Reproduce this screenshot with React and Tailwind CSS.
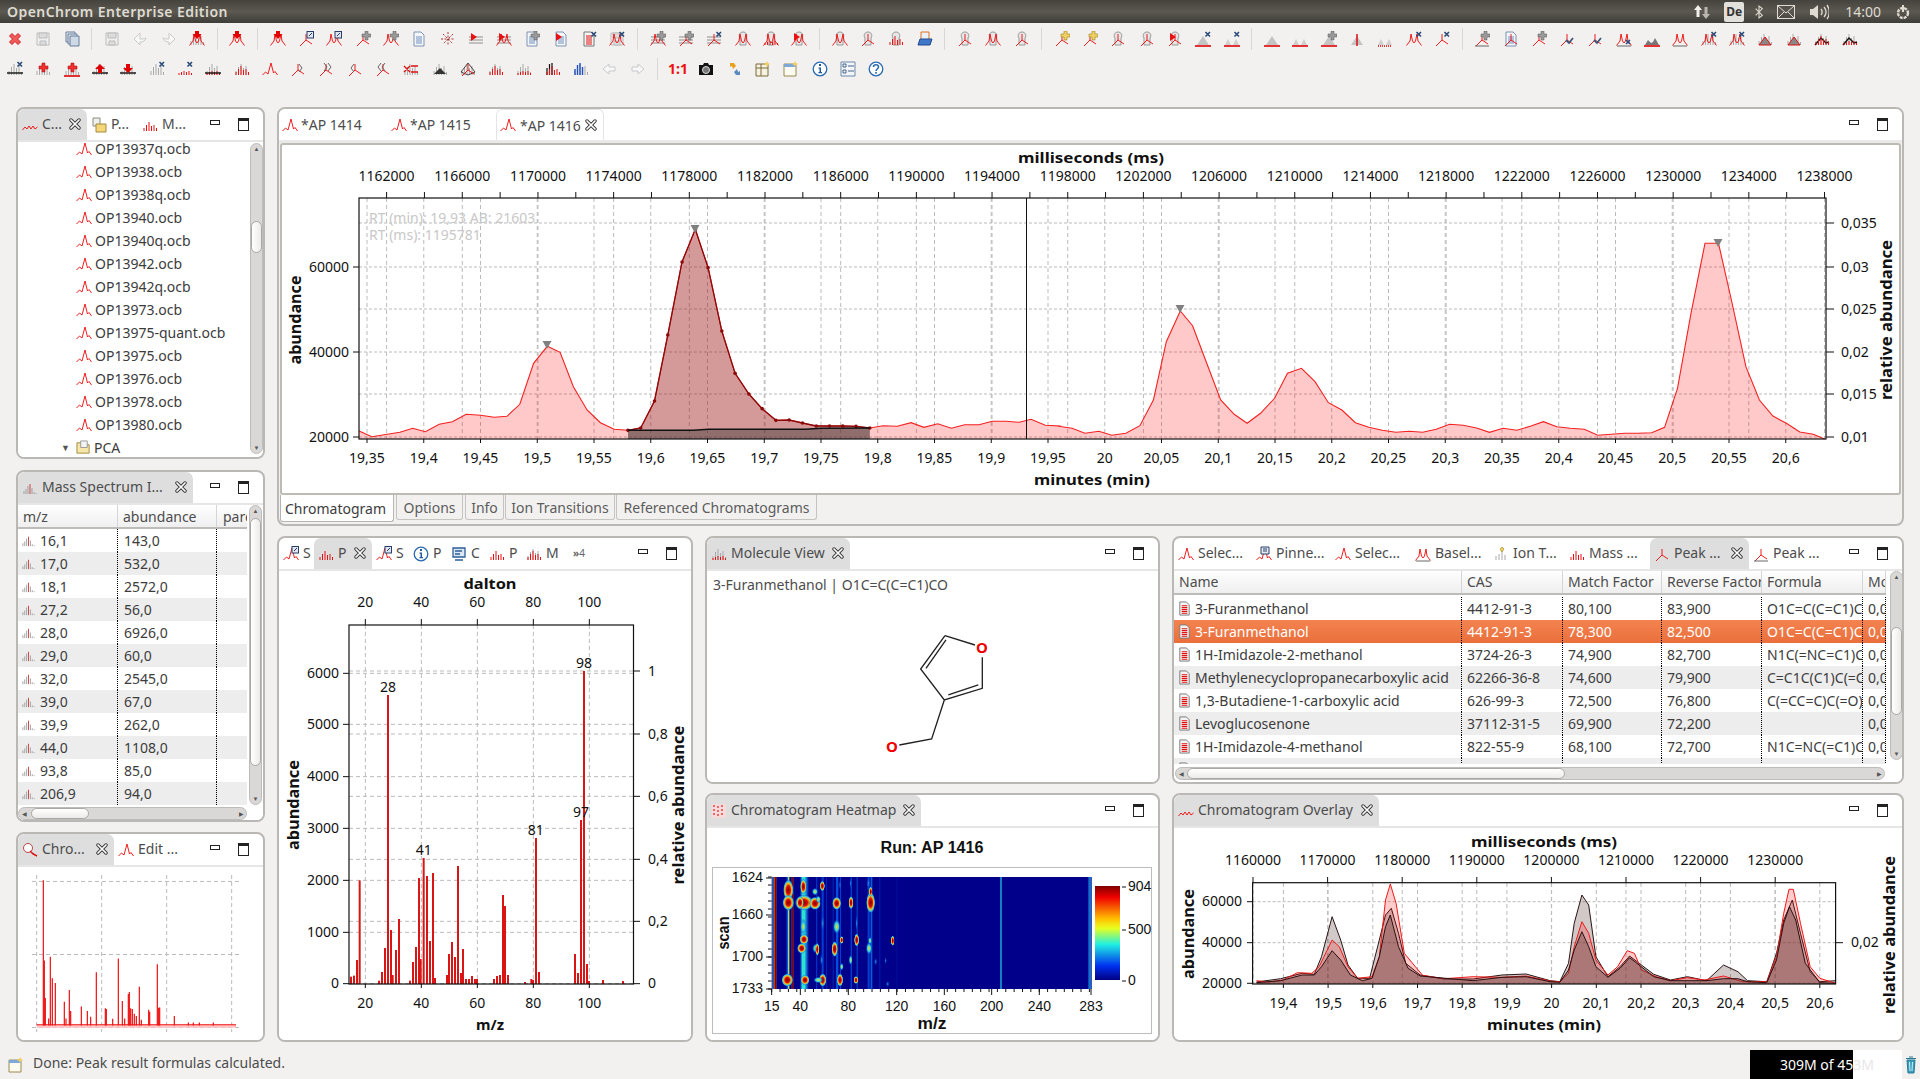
import React from "react";

const line = { fill: "none", stroke: "#ee1111", strokeWidth: 0.95 };
const gray = { fill: "none", stroke: "#a9a9a9", strokeWidth: 1 };

// icon parts, stacked on a 16x16 box
const parts = {
  chrom: <polyline {...line} points="0.5,14 3.5,11 6,13 9,2 11.5,12 13,10.5 15.5,14" />,
  twin: <polyline {...line} points="0.5,14.5 4,10 5,3 6.5,10 8,12 9.5,10 11,3 12,10 15.5,14.5" />,
  one: <path {...line} d="M8 3V9L2 15M8 9L14 13" />,
  wave: <polyline {...line} points="0.5,13 3,10 5,12 7,9 9,12 11,9 13,12 15.5,10" />,
  down: <path fill="#e00000" d="M6 0h4v3h2.5L8 8 3.5 3H6z" />,
  up: <path fill="#e00000" d="M8 3l5 5h-3v4H6V8H3z" />,
  dn2: <path fill="#e00000" d="M6 3h4v4h3l-5 5-5-5h3z" />,
  bars: <path {...gray} d="M2 14v-4M4.500 14V6M7 14V3M9.500 14V7M12 14V5M14.500 14v-3" />,
  red: <path fill="none" stroke="#e81010" strokeWidth="1" d="M2 14v-3M4.500 14V8M7 14V5M9.500 14V9M12 14V8M14.500 14v-3" />,
  low: <path fill="none" stroke="#e81010" strokeWidth="1" d="M2 14v-2M4.500 14v-3M7 14v-4M9.500 14v-3M12 14v-4M14.500 14v-2" />,
  blk: <path fill="none" stroke="#111" strokeWidth="1.200" d="M2 14V7M4.500 14V3M7 14V2" />,
  blue: <path fill="none" stroke="#2050c0" strokeWidth="1.400" d="M2 14V8M4.500 14V4M7 14V2M9.500 14V6" />,
  ul: <path stroke="#e00000" strokeWidth="1.600" d="M0 15h16" />,
  blkul: <path stroke="#111" strokeWidth="1.400" d="M0 12h16" />,
  plus: <path fill="#9a9a9a" stroke="#555" strokeWidth="0.500" d="M10 0h3v3h3v3h-3v3h-3V6H7V3h3z" />,
  yplus: <path fill="#f0d060" stroke="#a08020" strokeWidth="0.600" d="M10 0h3v3h3v3h-3v3h-3V6H7V3h3z" />,
  rplus: <path fill="#f03030" stroke="#a00" strokeWidth="0.500" d="M7 2h3v3h3v3h-3v3H7V8H4V5h3z" />,
  x: <path fill="none" stroke="#2a4a78" strokeWidth="1.600" d="M10.500 1l4.500 4.500M15 1l-4.500 4.500" />,
  box: <g><rect x="9" y="0.500" width="6.500" height="6.500" fill="#dfe6f0" stroke="#2a3f68" /><path stroke="#2a3f68" d="M11 5l3-3" /></g>,
  doc: <g><path fill="#f4f6fa" stroke="#7f93b0" d="M3 1h7l3 3v11H3z" /><path stroke="#6f8fc0" d="M5 6h6M5 8h6M5 10h6M5 12h6" /></g>,
  redlist: <g><path fill="#f4f4f4" stroke="#777" d="M3 1h7l3 3v11H3z" /><path stroke="#e01010" strokeWidth="1.200" d="M5 5h6M5 7h6M5 9h6M5 11h6M5 13h6" /></g>,
  lines: <path stroke="#8d8d8d" d="M1 6h14M1 9h14M1 12h14" />,
  flag: <path fill="#e81010" d="M3 2l6 4-6 4z" />,
  bottle: <path fill="#e6e6e6" stroke="#999" d="M5 14V7c-2-3 0-6 3-6s5 3 3 6v7z" />,
  tri: <path fill="#c4c4c4" d="M8 5l6 9H2z" />,
  tri2: <path fill="#cfcfcf" d="M4 8l3 6H1zM12 8l3 6H9z" />,
  spike: <path stroke="#e00000" strokeWidth="1.400" d="M8 3v12" />,
  dots: <path stroke="#e00000" strokeWidth="1.600" strokeDasharray="1 1" d="M1 15h14" />,
  check: <path fill="none" stroke="#3a5578" strokeWidth="1.800" d="M7 9l3 3 4-5" />,
  fillgray: <path fill="#777" d="M1 14l3-5 3 3 2-1 2-4 4 7z" />,
  fillred: <path fill="#888" stroke="#e01010" d="M2 14l6-8 6 8z" />,
  peakblk: <path fill="none" stroke="#111" strokeWidth="1.500" d="M1 14l6-7 5 5 3-1" />,
  chevr: <path fill="none" stroke="#666" d="M9 3l3 4-3 4" />,
  chevrr: <path fill="none" stroke="#666" d="M6 2l3 4-3 4M10 2l3 4-3 4" />,
  chevl: <path fill="none" stroke="#666" d="M7 3L4 7l3 4" />,
  chevll: <path fill="none" stroke="#666" d="M6 2L3 6l3 4M10 2L7 6l3 4" />,
  spark: <path stroke="#a33" strokeDasharray="2 1.500" d="M8 1v14M1 8h14M3 3l10 10M13 3L3 13" />,
  cross: <path fill="none" stroke="#e01010" strokeWidth="1.400" d="M1 5l6 6M7 5l-6 6M8 5h7M8 11h7" />,
  diamond: <path fill="none" stroke="#444" d="M8 2l7 9-7 3-7-3z" />,
  blktri: <path fill="#333" d="M2 13l6-6 6 6z" />,
  close: <path fill="#f15a5a" stroke="#cf2020" d="M2.500 5L5 2.500l3 3 3-3L13.500 5l-3 3 3 3-2.500 2.500-3-3-3 3L2.500 11l3-3z" />,
  save: <g><path fill="#f0f0f0" stroke="#bcbcbc" d="M2 2h12v12H2z" /><path fill="#dcdcdc" stroke="#bcbcbc" d="M4 2h8v5H4zM5 10h6v4H5z" /></g>,
  saveall: <g><path fill="#dfe8f2" stroke="#6a7f98" d="M2 1h9v10H2z" /><path fill="#dfe8f2" stroke="#6a7f98" d="M4 3h9v10H4z" /><path fill="#cdd9e6" stroke="#6a7f98" d="M6 5h9v10H6z" /></g>,
  undo: <path fill="#f8f8f8" stroke="#c9c9c9" d="M8 2l-6 6 6 6v-3c3 0 5-1 6-4-2 1-3 1-6 1z" />,
  redo: <path fill="#f8f8f8" stroke="#c9c9c9" d="M8 2l6 6-6 6v-3c-3 0-5-1-6-4 2 1 3 1 6 1z" />,
  back: <path fill="#f8f8f8" stroke="#c9c9c9" d="M8 3L2 8l6 5v-3h6V6H8z" />,
  fwd: <path fill="#f8f8f8" stroke="#c9c9c9" d="M8 3l6 5-6 5v-3H2V6h6z" />,
  folder: <g><path fill="#f6e7a8" stroke="#a08a40" d="M1 14V3h5l2 2h6v9z" /><path fill="#f4f4f4" stroke="#999" d="M5 1h7v7H5z" /></g>,
  fold2: <g><path fill="#e8f0f8" stroke="#e07020" d="M4 1h8v9H4z" /><path fill="#3f78c8" stroke="#204a90" d="M1 14l2-6h12l-2 6z" /></g>,
  camera: <g><path fill="#111" d="M1 4h4l1-2h4l1 2h4v10H1z" /><circle cx="8" cy="9" r="3.500" fill="#777" stroke="#ddd" /></g>,
  sync: <g><path fill="#e8a020" d="M3 2l4 0 2 3-3 3-1-3-2 1z" /><path fill="#5a8ac0" d="M13 14H9l-2-3 3-3 1 3 2-1z" /></g>,
  table: <g><path fill="#f6f2e0" stroke="#7a6a3a" d="M1 3h12v12H1z" /><path stroke="#7a6a3a" d="M1 7h12M6 3v12" /><path fill="#f0d060" d="M12 0l1 2 2 1-2 1-1 2-1-2-2-1 2-1z" /></g>,
  win: <g><path fill="#fdfaf0" stroke="#9a8a50" d="M1 3h12v12H1z" /><path fill="#7fa8d8" d="M1 3h12v3H1z" /><path fill="#f0d060" d="M12 0l1 2 2 1-2 1-1 2-1-2-2-1 2-1z" /></g>,
  info: <g><circle cx="8" cy="8" r="6.800" fill="#fff" stroke="#2a6ab0" strokeWidth="1.300" /><path fill="#1d5a9e" d="M7 3h2v2H7zM6.500 6.500H9V11h1v1.300H6.500V11h1V7.800h-1z" /></g>,
  help: <g><circle cx="8" cy="8" r="6.800" fill="#fff" stroke="#2a6ab0" strokeWidth="1.300" /><path fill="none" stroke="#2a6ab0" strokeWidth="1.600" d="M5.500 6c0-3 5-3 5 0 0 2-2.500 2-2.500 4" /><path stroke="#2a6ab0" strokeWidth="1.600" d="M8 11v1.800" /></g>,
  checks: <g><path fill="#f2f6fb" stroke="#6f88a8" d="M1 1h14v14H1z" /><path fill="none" stroke="#46648a" d="M3 3h3v3H3zM3 9h3v3H3zM8 5h6M8 10h6" /></g>,
  monitor: <g><path fill="#dbe7f4" stroke="#2d5f95" strokeWidth="1.300" d="M2 2h12v9H2z" /><path stroke="#2d5f95" strokeWidth="1.300" d="M4 5h7M4 8h5M4 14h8" /></g>,
  heat: <g><rect x="1" y="1" width="14" height="14" fill="#f7dada" /><path stroke="#e03030" strokeWidth="1.300" strokeDasharray="2 2" d="M3 2v12M7 3v10M11 2v12" /></g>,
  small: <g><path stroke="#a0a0a0" d="M2 14v-3M4 14V9M6 14V6M10 14V8M12 14v-2M14 14v-1" /><path stroke="#d04040" d="M8 14V4" /></g>,
  files: <g><path fill="#f0f0ea" stroke="#8a8a80" d="M2 1h7v8H2z" /><path fill="#f6d777" stroke="#a08a40" d="M5 7h10v8H5z" /></g>,
  search: <g><circle cx="6" cy="6" r="4.500" fill="#fff" stroke="#b44" /><path stroke="#e01010" strokeWidth="1.400" d="M8 9l3 3 4 2" /></g>,
  ion: <g><path {...gray} d="M3 14v-4M6 14V8M9 14V5M12 14V9" /><path fill="#f0d060" stroke="#a08020" strokeWidth="0.600" d="M9 1l2 2-2 3-2-3z" /></g>,
  pin: <g><path fill="#e4eaf4" stroke="#2a3f68" d="M5 1h8v7H5z" /><path stroke="#2a3f68" d="M7 3h4M7 5h4" /></g>,
  base: <path fill="none" stroke="#666" d="M1 15h14" />,
  blackx: <path fill="none" stroke="#2a4a78" strokeWidth="1.600" d="M10 9l4 4M14 9l-4 4" />,
};

function Ico({ n, s = 16, className = "" }) {
  return (
    <svg viewBox="0 0 16 16" width={s} height={s} className={"shrink-0 " + className}>
      {n.split(" ").map((k, i) => (
        <React.Fragment key={i}>{parts[k]}</React.Fragment>
      ))}
    </svg>
  );
}

const row1 = [
  "close", "save", "saveall", "|",
  "save", "undo", "redo", "bars twin down", "|",
  "twin down", "|",
  "twin down", "one box", "twin box", "one plus", "twin plus", "doc", "spark", "lines flag", "lines twin flag", "doc plus", "doc flag", "redlist x", "save twin x", "|",
  "lines twin plus", "lines one plus", "lines one x", "bottle twin", "bottle low twin", "bottle twin flag", "|",
  "bottle twin", "bottle one", "bottle red", "fold2", "|",
  "bottle one", "bottle twin", "bottle one", "|",
  "one yplus", "one yplus", "bottle one", "bottle one", "bottle one flag", "tri ul x", "tri2 ul x", "|",
  "tri ul", "tri2 ul", "tri ul plus", "tri spike", "tri2 dots", "twin x", "one x", "|",
  "one plus base", "doc one", "one plus", "one check", "one check", "twin base blackx", "fillgray ul", "twin base", "bars twin x", "bars twin x", "bars fillred", "bars fillred", "bars peakblk red", "bars peakblk low",
];
const row2 = [
  "bars blkul x", "bars rplus", "bars ul rplus", "bars blkul up", "bars blkul dn2", "bars x", "low x", "bars low blkul", "bars red",
  "chrom", "one chevr", "one chevrr", "one chevl", "one chevll", "bars cross", "bars blktri", "bars diamond one", "bars red", "bars low", "blk red", "bars blue", "back", "fwd", "|",
  "1:1", "camera", "sync", "table", "win", "info", "checks", "help",
];

function ToolRow({ items }) {
  return (
    <div className="flex items-center h-[31px] pl-[1px]">
      {items.map((it, i) =>
        it === "|" ? (
          <div key={i} className="w-[12.100px] h-[22px] flex justify-center">
            <div className="w-px h-full bg-[#d9d8d5]" />
          </div>
        ) : (
          <div key={i} className="w-[28.300px] flex justify-center items-center">
            {it === "1:1" ? <span className="text-[14px] font-bold text-[#f01010] leading-none">1:1</span> : <Ico n={it} />}
          </div>
        )
      )}
    </div>
  );
}

function CloseX() {
  return (
    <svg viewBox="0 0 12 12" width="12" height="12" className="shrink-0">
      <path d="M2 2l8 8M10 2l-8 8" stroke="#333" strokeWidth="3.400" strokeLinecap="round" />
      <path d="M2 2l8 8M10 2l-8 8" stroke="#fff" strokeWidth="1.700" strokeLinecap="round" />
    </svg>
  );
}

function WinButtons() {
  return (
    <div className="ml-auto flex items-center shrink-0">
      <div className="w-[10px] h-[5px] border border-[#222] bg-white -mt-[4px]" />
      <div className="w-[11px] h-[13px] ml-[18px] border border-[#222] border-t-[3px] bg-white" />
    </div>
  );
}

function Tab({ t }) {
  const bg = t.active ? "bg-[#dedede] rounded-t-[7px]" : "";
  return (
    <div className={"flex items-center h-full pl-[4px] gap-[4px] shrink-0 overflow-hidden " + t.w + " " + bg}>
      <Ico n={t.icon} />
      <span className="text-[#4c4c4c] whitespace-nowrap -mt-[2px]">{t.label}</span>
      {t.close && <span className="ml-auto mr-[6px] -mt-[2px]"><CloseX /></span>}
    </div>
  );
}

function Panel({ className, tabs, children, extra }) {
  return (
    <div className={"flex flex-col bg-white border-[2px] border-[#b9b8b4] rounded-[8px] overflow-hidden " + className}>
      <div className="flex items-center h-[31px] shrink-0 text-[14px] pr-[14px]">
        {tabs.map((t, i) => <Tab key={i} t={t} />)}
        {extra}
        <WinButtons />
      </div>
      <div className="h-[2px] bg-[#e6e6e6] shrink-0" />
      <div className="flex-1 min-h-0 bg-white overflow-hidden">{children}</div>
    </div>
  );
}

function VScroll({ className, top, h }) {
  return (
    <div className={"flex flex-col items-center w-[13px] bg-[#d9d8d6] border border-[#bdbcb9] rounded-full shrink-0 overflow-hidden " + className}>
      <div className="h-[10px] flex items-center justify-center text-[6px] text-[#555] leading-none shrink-0">▲</div>
      <div className={"shrink-0 " + top} />
      <div className={"w-full shrink-0 bg-linear-to-r from-white to-[#ecebe9] border border-[#a9a8a5] rounded-full " + h} />
      <div className="mt-auto h-[10px] flex items-center justify-center text-[6px] text-[#555] leading-none shrink-0">▼</div>
    </div>
  );
}

function HScroll({ className, left, w }) {
  return (
    <div className={"flex items-center h-[13px] bg-[#d9d8d6] border border-[#bdbcb9] rounded-full overflow-hidden " + className}>
      <div className="w-[10px] text-[6px] text-[#555] text-center leading-none shrink-0">◀</div>
      <div className={"shrink-0 " + left} />
      <div className={"h-full shrink-0 bg-linear-to-b from-white to-[#ecebe9] border border-[#a9a8a5] rounded-full " + w} />
      <div className="ml-auto w-[10px] text-[6px] text-[#555] text-center leading-none shrink-0">▶</div>
    </div>
  );
}

const files = ["OP13937q.ocb", "OP13938.ocb", "OP13938q.ocb", "OP13940.ocb", "OP13940q.ocb", "OP13942.ocb", "OP13942q.ocb", "OP13973.ocb", "OP13975-quant.ocb", "OP13975.ocb", "OP13976.ocb", "OP13978.ocb", "OP13980.ocb"];

const ions = [["16,1", "143,0"], ["17,0", "532,0"], ["18,1", "2572,0"], ["27,2", "56,0"], ["28,0", "6926,0"], ["29,0", "60,0"], ["32,0", "2545,0"], ["39,0", "67,0"], ["39,9", "262,0"], ["44,0", "1108,0"], ["93,8", "85,0"], ["206,9", "94,0"]];

const hits = [
  ["3-Furanmethanol", "4412-91-3", "80,100", "83,900", "O1C=C(C=C1)CO", "0,0"],
  ["3-Furanmethanol", "4412-91-3", "78,300", "82,500", "O1C=C(C=C1)CO", "0,0"],
  ["1H-Imidazole-2-methanol", "3724-26-3", "74,900", "82,700", "N1C(=NC=C1)CO", "0,0"],
  ["Methylenecyclopropanecarboxylic acid", "62266-36-8", "74,600", "79,900", "C=C1C(C1)C(=O)O", "0,0"],
  ["1,3-Butadiene-1-carboxylic acid", "626-99-3", "72,500", "76,800", "C(=CC=C)C(=O)O", "0,0"],
  ["Levoglucosenone", "37112-31-5", "69,900", "72,200", "", "0,0"],
  ["1H-Imidazole-4-methanol", "822-55-9", "68,100", "72,700", "N1C=NC(=C1)CO", "0,0"],
  ["2-Furancarboxaldehyde, 5-methyl", "620-02-0", "67,400", "71,900", "CC1=CC=C(O1)C=O", "0,0"],
];

const hitCols = ["w-[288px]", "w-[101px]", "w-[99px]", "w-[100px]", "w-[101px]", "w-[23px]"];
const hitHead = ["Name", "CAS", "Match Factor", "Reverse Factor", "Formula", "Molecular Weight"];

function HitsTable() {
  return (
    <div className="flex h-full">
      <div className="w-[712px] flex flex-col shrink-0">
        <div className="flex h-[25px] shrink-0 bg-linear-to-b from-white to-[#efefef] border-b-[2px] border-[#bdbcb9] text-[#4c4c4c] -mt-[1px]">
          {hitHead.map((h, i) => (
            <div key={i} className={"pl-[5px] flex items-center border-r border-[#d5d5d5] overflow-hidden whitespace-nowrap " + hitCols[i]}>{h}</div>
          ))}
        </div>
        <div className="h-[167px] mt-[2px] overflow-hidden">
          {hits.map((r, i) => {
            const sel = i === 1;
            const bg = sel ? "bg-linear-to-b from-[#f48350] to-[#e96f3c] text-white" : i % 2 ? "bg-[#ededed] text-[#3c3c3c]" : "bg-white text-[#3c3c3c]";
            return (
              <div key={i} className={"flex h-[23px] " + bg}>
                {r.map((c, j) => (
                  <div key={j} className={"flex items-center whitespace-nowrap overflow-hidden pl-[5px] border-r border-dotted border-black " + hitCols[j]}>
                    {j === 0 && <Ico n="redlist" s={15} className="mr-[3px] -ml-[2px]" />}
                    {c}
                  </div>
                ))}
              </div>
            );
          })}
        </div>
        <HScroll className="mt-[3px] ml-[1px] w-[710px]" left="w-[1px]" w="w-[378px]" />
      </div>
      <VScroll className="ml-[4px] h-[189px]" top="h-[45px]" h="h-[88px]" />
    </div>
  );
}

// axis helpers
const range = (n, f) => Array.from({ length: n }, (_, i) => f(i));
const dec = (v) => String(v).replace(".", ",");
const pts = (list, fx, fy) => list.map(([x, y]) => fx(x).toFixed(1) + "," + fy(y).toFixed(1)).join(" ");
const dash = { stroke: "#bbbbbb", strokeWidth: 1, strokeDasharray: "4 3" };

function Num({ x, y, a = "middle", s = 14, children, fill = "#111" }) {
  return <text x={x} y={y - 1} textAnchor={a} dominantBaseline="central" fontSize={s} fill={fill}>{children}</text>;
}
function Title({ x, y, len, rot, s = 14, children }) {
  const yy = rot ? y : y - 1;
  return (
    <text x={x} y={yy} textAnchor="middle" dominantBaseline="central" fontSize={s} fontWeight="700" fill="#111"
      textLength={len} lengthAdjust="spacingAndGlyphs" transform={rot ? `rotate(-90 ${x} ${yy})` : undefined}>
      {children}
    </text>
  );
}

// main chromatogram, traced from the screen
const mainLeft = [[155,873],[180,890],[235,877],[260,865],[285,875],[312,853],[338,845],[365,823],[393,826],[420,832],[445,829],[470,793],[497,670],[524,619],[549,637],[575,740],[602,810],[628,848],[655,868],[682,871]];
const mainPeak = [[682,871],[707,864],[734,783],[760,585],[788,366],[814,268],[839,383],[866,573],[892,700],[919,762],[945,806],[972,841],[998,840],[1024,849],[1051,858],[1077,858],[1103,858],[1129,859],[1156,864]];
const mainMid = [[1182,857],[1210,859],[1237,848],[1262,862],[1289,851],[1316,865],[1342,854],[1370,854],[1396,844],[1423,844],[1449,847],[1472,838],[1500,856],[1527,858]];
const mainRight = [[33,859],[57,865],[80,880],[105,874],[128,886],[153,880],[178,857],[202,780],[225,605],[250,513],[272,557],[295,660],[322,780],[346,823],[369,850],[393,820],[418,775],[441,700],[466,685],[490,725],[514,788],[538,810],[562,848],[586,862],[610,871],[634,877],[658,874],[682,877],[706,868],[730,853],[754,856],[778,864],[801,877],[825,865],[850,871],[875,858],[897,845],[921,860],[945,865],[970,868],[994,886],[1018,883],[1042,880],[1066,880],[1090,878],[1113,862],[1136,745],[1160,520],[1185,310],[1209,310],[1232,480],[1258,680],[1282,780],[1306,828],[1330,850],[1354,876],[1378,883],[1398,897]];
const fx9 = (x) => 280 + x / 1.96;
const fxA = (x) => 1040 + x / 1.782;
const fy3 = (y) => 140 + y / 3;
const mainLine =
  pts([...mainLeft, ...mainPeak, ...mainMid], fx9, fy3) + " " + pts(mainRight, fxA, fy3);
const peakLine = pts(mainPeak, fx9, fy3);
const baseLine = pts([[682,871],[810,871],[840,868],[1030,868],[1060,865],[1156,864]], fx9, fy3);

function MainChart() {
  const bx = (i) => 367 + i * 56.75;
  const tx = (i) => 386.6 + i * 37.84;
  const yL = [[60000, 267], [40000, 352], [20000, 437]];
  const yR = [["0,035", 223], ["0,03", 267], ["0,025", 309], ["0,02", 352], ["0,015", 394], ["0,01", 437]];
  const xpk = fx9(682), xpe = fx9(1156);
  return (
    <svg viewBox="282 145 1617 348" className="w-[1617px] h-[348px] block">
      {range(26, (i) => <line key={i} x1={bx(i)} x2={bx(i)} y1="198" y2="439" {...dash} />)}
      {range(20, (i) => <line key={i} x1={tx(i * 2)} x2={tx(i * 2)} y1="198" y2="439" {...dash} />)}
      {yR.map(([l, y]) => <line key={l} x1="359" x2="1826" y1={y} y2={y} stroke="#bbb" strokeDasharray="3 2" />)}
      <polygon points={`359,439 ${mainLine} 1826,439`} fill="#ff0000" fillOpacity="0.21" />
      <polygon points={`${peakLine} ${xpe},439 ${xpk},439`} fill="#703030" fillOpacity="0.3" />
      <polygon points={`${baseLine} ${xpe},439 ${xpk},439`} fill="#333" fillOpacity="0.42" />
      <polyline points={mainLine} fill="none" stroke="#f52020" strokeWidth="1.100" />
      <polyline points={peakLine} fill="none" stroke="#8c0a0a" strokeWidth="1.300" />
      {mainPeak.map(([x, y], i) => <circle key={i} cx={fx9(x)} cy={fy3(y)} r="1.800" fill="#8c0a0a" />)}
      <polyline points={baseLine} fill="none" stroke="#111" strokeWidth="1.500" />
      {[[547, 341], [695, 225], [1180, 305], [1718, 239]].map(([x, y]) => (
        <polygon key={x} points={`${x - 4.500},${y} ${x + 4.500},${y} ${x},${y + 8}`} fill="#808080" />
      ))}
      <line x1="1026.500" x2="1026.500" y1="198" y2="439" stroke="#111" />
      <rect x="359" y="198" width="1467" height="241" fill="none" stroke="#111" strokeWidth="1.200" />
      {range(39, (i) => <line key={i} x1={tx(i)} x2={tx(i)} y1="192" y2="198" stroke="#111" />)}
      {range(20, (i) => <Num key={i} x={tx(i * 2)} y={176}>{1162000 + i * 4000}</Num>)}
      {range(26, (i) => <line key={i} x1={bx(i)} x2={bx(i)} y1="439" y2="443" stroke="#111" />)}
      {range(26, (i) => <Num key={i} x={bx(i)} y={458}>{dec((1935 + 5 * i) / 100)}</Num>)}
      {yL.map(([l, y]) => (
        <g key={l}>
          <line x1="353" x2="359" y1={y} y2={y} stroke="#111" />
          <Num x={349} y={y} a="end">{l}</Num>
        </g>
      ))}
      {yR.map(([l, y]) => (
        <g key={l}>
          <line x1="1826" x2="1834" y1={y} y2={y} stroke="#111" />
          <Num x={1841} y={y} a="start">{l}</Num>
        </g>
      ))}
      <Num x={369} y={218} a="start" fill="#c8c8c8">RT (min): 19,93 AB: 21603</Num>
      <Num x={369} y={235} a="start" fill="#c8c8c8">RT (ms): 1195781</Num>
      <Title x={1091} y={158} len={146} s={15}>milliseconds (ms)</Title>
      <Title x={1092} y={480} len={116} s={15}>minutes (min)</Title>
      <Title x={295} y={320} len={89} rot s={16}>abundance</Title>
      <Title x={1886} y={320} len={160} rot s={16}>relative abundance</Title>
    </svg>
  );
}

const specBars = [[228,1340],[237,1337],[246,1290],[254,1051],[312,1352],[321,1326],[330,1254],[339,495],[348,1200],[353,1335],[363,1260],[372,1167],[405,1352],[414,1296],[423,1251],[432,1044],[437,1287],[446,984],[456,1038],[465,1233],[474,1029],[480,1344],[516,1335],[522,1272],[531,1236],[540,1281],[549,1008],[558,1329],[564,1257],[573,1347],[582,1347],[591,1338],[600,1347],[606,1347],[657,1347],[666,1338],[675,1335],[684,1095],[690,1128],[699,1335],[750,1356],[769,1347],[774,1350],[783,924],[792,1326],[900,1272],[909,1329],[918,870],[927,423],[936,1302],[942,1353],[984,1350],[1044,1353]];

function SpectrumChart() {
  const zx = (x) => 275 + x / 3;
  const zy = (y) => 530 + y / 3;
  const xT = [[20, 271], [40, 439], [60, 607], [80, 775], [100, 943]];
  const yL = [[6000, 430], [5000, 583], [4000, 740], [3000, 895], [2000, 1051], [1000, 1207], [0, 1361]];
  const yR = [["1", 423], ["0,8", 612], ["0,6", 799], ["0,4", 988], ["0,2", 1174], ["0", 1361]];
  const labels = [[28, 339, 472], [41, 446, 960], [81, 782, 900], [97, 918, 846], [98, 927, 399]];
  return (
    <svg viewBox="281 571 408 469" className="w-[408px] h-[469px] block">
      {xT.map(([l, x]) => <line key={l} x1={zx(x)} x2={zx(x)} y1="625" y2="984" {...dash} />)}
      {[...yL, ...yR].map(([l, y]) => <line key={l + "g" + y} x1="349" x2="633" y1={zy(y)} y2={zy(y)} {...dash} />)}
      {specBars.map(([x, y]) => <rect key={x} x={zx(x) - 1} y={zy(y)} width="2" height={984 - zy(y)} fill="#d81616" />)}
      <rect x="349" y="625" width="284.500" height="359" fill="none" stroke="#111" strokeWidth="1.200" />
      {xT.map(([l, x]) => (
        <g key={l}>
          <line x1={zx(x)} x2={zx(x)} y1="619" y2="625" stroke="#111" />
          <line x1={zx(x)} x2={zx(x)} y1="984" y2="988" stroke="#111" />
          <Num x={zx(x)} y={602}>{l}</Num>
          <Num x={zx(x)} y={1003}>{l}</Num>
        </g>
      ))}
      {yL.map(([l, y]) => (
        <g key={l}>
          <line x1="343" x2="349" y1={zy(y)} y2={zy(y)} stroke="#111" />
          <Num x={339} y={zy(y)} a="end">{l}</Num>
        </g>
      ))}
      {yR.map(([l, y]) => (
        <g key={l}>
          <line x1="633" x2="640" y1={zy(y)} y2={zy(y)} stroke="#111" />
          <Num x={648} y={zy(y)} a="start">{l}</Num>
        </g>
      ))}
      {labels.map(([l, x, y]) => <Num key={l} x={zx(x)} y={zy(y)}>{l}</Num>)}
      <Title x={490} y={584} len={53} s={15}>dalton</Title>
      <Title x={490} y={1025} len={28} s={15}>m/z</Title>
      <Title x={293} y={805} len={90} rot s={16}>abundance</Title>
      <Title x={677.500} y={805} len={159} rot s={16}>relative abundance</Title>
    </svg>
  );
}

function Molecule() {
  const p = "M735 317L825 345M847 382V475L733 510L662 417L735 317M835 465L745 495M678 415L738 330M733 510L695 627L598 645";
  return (
    <svg viewBox="709 597 447 185" className="w-[447px] h-[185px] block">
      <g transform="translate(700 530) scale(0.3333)">
        <path d={p} fill="none" stroke="#222" strokeWidth="4" />
      </g>
      <text x={982} y={647} textAnchor="middle" dominantBaseline="central" fontSize="15" fontWeight="700" fill="#f00000">O</text>
      <text x={892} y={746} textAnchor="middle" dominantBaseline="central" fontSize="15" fontWeight="700" fill="#f00000">O</text>
    </svg>
  );
}

const stripes = [[216,5,"#0a60d0"],[221,8,"#e06000"],[224,4,"#8a0000"],[260,10,"#0060d0"],[264,3,"#e0d020"],[275,5,"#d05000"],[276,3,"#900000"],[302,20,"#1090d8"],[306,10,"#30e0d0"],[320,5,"#1040c0"],[348,4,"#0030c0"],[365,6,"#0040d0"],[378,3,"#0020b0"],[398,3,"#0028b0"],[408,7,"#0050e0"],[420,3,"#0040d0"],[452,4,"#0040d0"],[470,3,"#0050d0"],[503,6,"#0040d0"],[512,5,"#0060e0"],[538,3,"#0020b0"],[590,2,"#001aa0"],[900,6,"#1080c0"],[1165,8,"#1070d0"]];
const spots = [[265,1080,8,16,"hot"],[265,1118,9,12,"hot"],[312,1118,14,12,"hot"],[300,1118,6,10,"hot"],[310,1070,5,12,"hot"],[310,1190,5,12,"warm"],[312,1228,7,8,"hot"],[305,1255,7,8,"hot"],[262,1350,9,10,"hot"],[315,1350,7,8,"hot"],[345,1120,9,10,"hot"],[355,1108,4,6,"warm"],[367,1068,4,8,"hot"],[345,1085,5,6,"warm"],[348,1255,6,8,"warm"],[352,1258,3,10,"hot"],[368,1350,6,10,"hot"],[355,1350,8,5,"warm"],[410,1120,7,10,"hot"],[410,1190,6,12,"warm"],[404,1257,5,12,"hot"],[425,1230,3,6,"hot"],[420,1350,5,10,"hot"],[453,1118,4,10,"hot"],[452,1290,3,8,"warm"],[470,1230,4,10,"hot"],[468,1350,4,6,"hot"],[512,1118,7,16,"hot"],[512,1085,3,8,"hot"],[507,1255,5,10,"warm"],[510,1232,3,6,"warm"],[425,1310,3,6,"warm"],[578,1232,3,8,"hot"],[527,1295,3,6,"cool"],[557,1292,2,6,"cool"],[563,1362,3,5,"cool"],[470,1180,2,14,"cool"],[368,1180,3,14,"cool"],[365,1290,3,10,"cool"],[505,1060,3,10,"cool"],[420,1065,2,8,"cool"],[452,1060,2,8,"cool"]];

function Heatmap() {
  const hx = (x) => 700 + x / 3;
  const hy = (y) => 530 + y / 3;
  const xT = [[15, 215], [40, 301], [80, 445], [120, 590], [160, 733], [200, 875], [240, 1018], [283, 1173]];
  const yT = [[1624, 878], [1660, 915], [1700, 957], [1733, 989]];
  const ar = { fontFamily: "Liberation Sans, Arial, sans-serif" };
  return (
    <svg viewBox="709 828 447 212" className="w-[447px] h-[212px] block">
      <defs>
        <radialGradient id="hot">
          <stop offset="0" stopColor="#800000" /><stop offset="0.4" stopColor="#e01000" /><stop offset="0.62" stopColor="#f0c020" /><stop offset="0.82" stopColor="#30c0e0" /><stop offset="1" stopColor="#0020c0" stopOpacity="0" />
        </radialGradient>
        <radialGradient id="warm">
          <stop offset="0" stopColor="#f0e020" /><stop offset="0.5" stopColor="#30d0e0" /><stop offset="1" stopColor="#0020c0" stopOpacity="0" />
        </radialGradient>
        <radialGradient id="cool">
          <stop offset="0" stopColor="#20a0e0" /><stop offset="1" stopColor="#0020c0" stopOpacity="0" />
        </radialGradient>
        <linearGradient id="jet" x1="0" y1="0" x2="0" y2="1">
          <stop offset="0" stopColor="#800000" /><stop offset="0.12" stopColor="#f00000" /><stop offset="0.35" stopColor="#ffc000" /><stop offset="0.45" stopColor="#e8ff20" /><stop offset="0.62" stopColor="#20f0e0" /><stop offset="0.85" stopColor="#0030f0" /><stop offset="1" stopColor="#000080" />
        </linearGradient>
      </defs>
      <Title x={932} y={848} len={103} s={16}><tspan {...ar}>Run: AP 1416</tspan></Title>
      <rect x="712.500" y="867.500" width="439" height="166" fill="none" stroke="#bdbdbd" strokeWidth="1" />
      <rect x="771.700" y="877" width="320" height="112" fill="#00008a" />
      {stripes.map(([x, w, c], i) => <rect key={i} x={hx(x)} y="877" width={w / 3} height="112" fill={c} />)}
      {spots.map(([x, y, rx, ry, g], i) => <ellipse key={i} cx={hx(x)} cy={hy(y)} rx={rx / 1.500} ry={ry / 1.500} fill={`url(#${g})`} />)}
      {range(39, (i) => <line key={i} x1={771.700 + i * 8.360} x2={771.700 + i * 8.360} y1="989" y2="992" stroke="#111" />)}
      {xT.map(([l, x]) => (
        <g key={l} {...ar}>
          <line x1={hx(x)} x2={hx(x)} y1="989" y2="995" stroke="#111" />
          <Num x={hx(x)} y={1007} s={14}>{l}</Num>
        </g>
      ))}
      {range(15, (i) => <line key={i} x1="768" x2="771.700" y1={877 + i * 8} y2={877 + i * 8} stroke="#111" />)}
      {yT.map(([l, y]) => (
        <g key={l} {...ar}>
          <line x1="766" x2="771.700" y1={y} y2={y} stroke="#111" />
          <Num x={763} y={y} a="end" s={14}>{l}</Num>
        </g>
      ))}
      <rect x="1095" y="886" width="25" height="94" fill="url(#jet)" />
      {[[904, 887], [500, 930], [0, 981]].map(([l, y]) => (
        <g key={l} {...ar}>
          <line x1="1122" x2="1126" y1={y} y2={y} stroke="#111" />
          <Num x={1128} y={y} a="start" s={14}>{l}</Num>
        </g>
      ))}
      <Title x={932} y={1024} len={29} s={16}><tspan {...ar}>m/z</tspan></Title>
      <Title x={723} y={933} len={33} rot s={17}><tspan {...ar}>scan</tspan></Title>
    </svg>
  );
}

const ovRed = [[190,572],[215,576],[245,570],[275,548],[305,550],[320,530],[347,450],[362,470],[380,530],[400,565],[430,560],[445,500],[458,330],[468,282],[480,340],[497,490],[520,530],[535,556],[580,566],[640,560],[700,562],[750,558],[800,573],[820,575],[838,550],[850,470],[866,395],[880,430],[895,510],[920,555],[940,530],[960,482],[975,490],[990,540],[1020,560],[1050,572],[1085,563],[1120,570],[1160,558],[1200,575],[1250,575],[1270,500],[1285,370],[1296,298],[1305,298],[1320,400],[1340,530],[1360,565],[1393,580]];
const ovGray = [[190,576],[240,566],[285,550],[310,553],[325,500],[347,380],[365,450],[380,525],[400,565],[425,565],[445,450],[458,375],[470,355],[485,430],[500,520],[530,555],[580,567],[640,567],[700,555],[750,552],[800,572],[820,575],[838,520],[850,400],[866,315],[880,345],[895,500],[920,560],[945,530],[965,498],[985,520],[1015,553],[1050,570],[1085,560],[1125,572],[1160,525],[1190,545],[1210,572],[1250,575],[1270,490],[1285,390],[1303,330],[1320,430],[1340,545],[1360,575],[1393,572]];
const ovDark = [[190,578],[240,572],[285,555],[310,555],[325,530],[347,482],[365,510],[385,555],[410,572],[430,565],[445,500],[458,410],[468,375],[485,470],[505,535],[530,558],[640,572],[700,562],[750,560],[800,575],[820,577],[838,540],[850,480],[866,425],[880,470],[895,530],[920,562],[945,535],[965,503],[985,525],[1015,560],[1050,572],[1125,572],[1160,566],[1190,566],[1210,575],[1250,578],[1270,510],[1285,400],[1297,350],[1310,390],[1330,520],[1360,578],[1393,580]];

function Overlay() {
  const ox = (x) => 1165 + x / 2.077;
  const oy = (y) => 790 + y / 3;
  const bx = (i) => 1283.400 + i * 44.700;
  const tx = (i) => 1253 + i * 74.600;
  const L = ox(190), R = ox(1393);
  const area = (s, fill, op, stroke) => (
    <g>
      <polygon points={`${L},984 ${pts(s, ox, oy)} ${R},984`} fill={fill} fillOpacity={op} />
      <polyline points={pts(s, ox, oy)} fill="none" stroke={stroke} strokeWidth="1" />
    </g>
  );
  return (
    <svg viewBox="1174 828 728 212" className="w-[728px] h-[212px] block">
      {range(13, (i) => <line key={i} x1={bx(i)} x2={bx(i)} y1="883" y2="984" {...dash} />)}
      {range(8, (i) => <line key={i} x1={tx(i)} x2={tx(i)} y1="883" y2="984" {...dash} />)}
      {[901.700, 942.700, 983].map((y) => <line key={y} x1="1252.600" x2="1835.700" y1={y} y2={y} stroke="#bbb" strokeDasharray="3 2" />)}
      {area(ovGray, "#5a3a3a", 0.28, "#2a1515")}
      {area(ovRed, "#ff0000", 0.2, "#f01818")}
      {area(ovDark, "#5a3030", 0.36, "#2a1010")}
      <rect x="1252.600" y="882.700" width="583" height="101.300" fill="none" stroke="#111" strokeWidth="1.200" />
      {range(8, (i) => (
        <g key={i}>
          <line x1={tx(i)} x2={tx(i)} y1="877" y2="883" stroke="#111" />
          <Num x={tx(i)} y={860}>{1160000 + i * 10000}</Num>
        </g>
      ))}
      {range(13, (i) => (
        <g key={i}>
          <line x1={bx(i)} x2={bx(i)} y1="984" y2="988" stroke="#111" />
          <Num x={bx(i)} y={1003}>{dec((194 + i) / 10)}</Num>
        </g>
      ))}
      {[[60000, 901.700], [40000, 942.700], [20000, 983.300]].map(([l, y]) => (
        <g key={l}>
          <line x1="1247" x2="1252.600" y1={y} y2={y} stroke="#111" />
          <Num x={1242} y={y} a="end">{l}</Num>
        </g>
      ))}
      <line x1="1835.700" x2="1843" y1="942.700" y2="942.700" stroke="#111" />
      <Num x={1851} y={942.700} a="start">0,02</Num>
      <Title x={1544} y={842} len={146} s={15}>milliseconds (ms)</Title>
      <Title x={1544} y={1025} len={114} s={15}>minutes (min)</Title>
      <Title x={1188} y={934} len={90} rot s={16}>abundance</Title>
      <Title x={1889} y={935} len={158} rot s={16}>relative abundance</Title>
    </svg>
  );
}

const miniSpikes = [[130,1062],[133,1265],[136,1360],[146,1412],[151,1256],[157,1310],[166,1322],[193,1370],[198,1412],[208,1340],[212,1393],[244,1382],[262,1393],[272,1408],[289,1295],[316,1386],[319,1388],[338,1413],[355,1260],[367,1368],[374,1412],[385,1350],[388,1345],[392,1386],[397,1388],[403,1400],[409,1406],[418,1332],[424,1415],[446,1390],[449,1395],[472,1275],[476,1385],[479,1384],[523,1406],[565,1422],[580,1422],[598,1422],[640,1422]];

function MiniChart() {
  const mx = (x) => x / 3;
  const my = (y) => 460 + y / 2.533;
  return (
    <svg viewBox="18 866 245 174" className="w-[245px] h-[174px] block">
      {[110, 305, 500, 695].map((x) => <line key={x} x1={mx(x)} x2={mx(x)} y1="874" y2="1031" {...dash} />)}
      {[1065, 1250, 1435].map((y) => <line key={y} x1="32" x2="240" y1={my(y)} y2={my(y)} {...dash} />)}
      <rect x={mx(110)} y={my(1428)} width={(708 - 110) / 3} height="3" fill="#ffc4c4" />
      {miniSpikes.map(([x, y]) => <line key={x} x1={mx(x)} x2={mx(x)} y1={my(y)} y2={my(1430)} stroke="#f01010" strokeWidth="1.200" />)}
      <line x1={mx(110)} x2={mx(708)} y1={my(1428)} y2={my(1428)} stroke="#f01010" />
    </svg>
  );
}

export default function App() {
  return (
    <div className="w-[1920px] h-[1079px] overflow-hidden bg-[#f2f1f0] font-['Noto_Sans',sans-serif] flex flex-col">
      {/* window title bar */}
      <div className="h-[23px] shrink-0 flex items-center bg-linear-to-b from-[#45433d] via-[#5b5950] to-[#3e3d38] pl-[7px] text-[#dfdbd2]">
        <span className="text-[14px] font-semibold tracking-[0.45px]">OpenChrom Enterprise Edition</span>
        <div className="ml-auto flex items-center">
          <svg viewBox="0 0 18 16" width="18" height="16">
            <path fill="#f2f0ea" d="M5 1l4 5H6.500v7h-3V6H1z" />
            <path fill="#b8b6ae" d="M13 15l4-5h-2.500V3h-3v7H9z" />
          </svg>
          <div className="w-[20px] h-[20px] ml-[13px] rounded-[2px] bg-[#e2e0da] text-[#333] text-[12px] font-bold flex items-center justify-center">De</div>
          <svg viewBox="0 0 12 16" width="10" height="16" className="ml-[10px]">
            <path fill="none" stroke="#dfdbd2" strokeWidth="1.300" d="M2 4l8 8-4 3V1l4 3-8 8" />
          </svg>
          <svg viewBox="0 0 18 14" width="18" height="14" className="ml-[13px]">
            <rect x="0.500" y="0.500" width="17" height="13" fill="none" stroke="#dfdbd2" />
            <path fill="none" stroke="#dfdbd2" d="M1 1l8 7 8-7M1 13l6-6M17 13l-6-6" />
          </svg>
          <svg viewBox="0 0 20 16" width="20" height="16" className="ml-[14px]">
            <path fill="#dfdbd2" d="M1 5h3l5-4v14l-5-4H1z" />
            <path fill="none" stroke="#dfdbd2" strokeWidth="1.300" d="M12 5c1.500 2 1.500 4 0 6M15 3c2.500 3 2.500 7 0 10M18 1c3 4 3 10 0 14" />
          </svg>
          <span className="ml-[16px] text-[14px]">14:00</span>
          <svg viewBox="0 0 16 16" width="16" height="16" className="ml-[14px] mr-[9px]">
            <circle cx="8" cy="9" r="5" fill="none" stroke="#dfdbd2" strokeWidth="2.400" strokeDasharray="3 1" />
            <path stroke="#dfdbd2" strokeWidth="2" d="M8 1v7" />
          </svg>
        </div>
      </div>

      {/* toolbars */}
      <div className="h-[84px] shrink-0">
        <ToolRow items={row1} />
        <div className="-mt-[1px]"><ToolRow items={row2} /></div>
      </div>

      {/* workbench */}
      <div className="flex pl-[16px] gap-[12px] h-[935px] shrink-0">
        <div className="w-[249px] flex flex-col shrink-0">
          <Panel
            className="h-[352px] shrink-0"
            tabs={[
              { w: "w-[69px]", icon: "wave", label: "C...", active: true, close: true },
              { w: "w-[51px]", icon: "files", label: "P..." },
              { w: "w-[51px]", icon: "red", label: "M..." },
            ]}
          >
            <div className="flex h-full text-[14px] text-[#3c3c3c]">
              <div className="w-[230px] overflow-hidden">
                <div className="-mt-[5px]">
                  {files.map((f) => (
                    <div key={f} className="h-[23px] flex items-center pl-[58px] gap-[3px]">
                      <Ico n="chrom" />
                      {f}
                    </div>
                  ))}
                  <div className="h-[23px] flex items-center pl-[43px] gap-[3px]">
                    <span className="text-[9px] text-[#555] w-[10px]">▼</span>
                    <Ico n="folder" s={15} className="ml-[2px]" />
                    PCA
                  </div>
                </div>
              </div>
              <VScroll className="ml-[2px] h-[311px] mt-[1px]" top="h-[67px]" h="h-[32px]" />
            </div>
          </Panel>

          <Panel
            className="h-[352px] shrink-0 mt-[11px]"
            tabs={[{ w: "w-[175px]", icon: "small", label: "Mass Spectrum I...", active: true, close: true }]}
          >
            <div className="flex text-[14px] text-[#3c3c3c]">
              <div className="w-[229px] shrink-0">
                <div className="flex h-[24px] bg-linear-to-b from-white to-[#efefef] border-b-[2px] border-[#bdbcb9] text-[#4c4c4c]">
                  <div className="w-[100px] pl-[5px] flex items-center border-r border-[#d5d5d5]">m/z</div>
                  <div className="w-[99px] pl-[5px] flex items-center border-r border-[#d5d5d5]">abundance</div>
                  <div className="w-[30px] pl-[6px] flex items-center overflow-hidden">parent</div>
                </div>
                {ions.map((r, i) => (
                  <div key={i} className={"flex h-[23px] " + (i % 2 ? "bg-[#ededed]" : "bg-white")}>
                    <div className="w-[100px] flex items-center pl-[3px] gap-[4px] border-r border-dotted border-black">
                      <Ico n="small" s={15} />
                      {r[0]}
                    </div>
                    <div className="w-[99px] flex items-center pl-[6px] border-r border-dotted border-black">{r[1]}</div>
                    <div className="w-[30px]" />
                  </div>
                ))}
              </div>
              <VScroll className="ml-[2px] h-[300px]" top="h-[2px]" h="h-[248px]" />
            </div>
            <HScroll className="mt-[2px] w-[229px]" left="w-[2px]" w="w-[58px]" />
          </Panel>

          <Panel
            className="h-[210px] shrink-0 mt-[10px]"
            tabs={[
              { w: "w-[96px]", icon: "search", label: "Chro...", active: true, close: true },
              { w: "w-[64px]", icon: "chrom", label: "Edit ..." },
            ]}
          >
            <MiniChart />
          </Panel>
        </div>

        <div className="w-[1627px] flex flex-col shrink-0">
          {/* main editor */}
          <div className="h-[419px] shrink-0 flex flex-col bg-[#f2f1f0] border-[2px] border-[#b9b8b4] rounded-[8px] overflow-hidden">
            <div className="flex items-center h-[31px] shrink-0 bg-white text-[14px] pr-[14px] whitespace-nowrap">
              <div className="flex items-center h-full w-[108px] pl-[3px] gap-[3px] text-[#4c4c4c]"><Ico n="chrom" />*AP 1414</div>
              <div className="flex items-center h-full w-[109px] pl-[4px] gap-[3px] text-[#4c4c4c]"><Ico n="chrom" />*AP 1415</div>
              <div className="flex items-center h-full w-[108px] pl-[3px] gap-[4px] text-[#4c4c4c] border-x border-t border-[#e4e4e4] rounded-t-[6px]">
                <Ico n="chrom" />*AP 1416
                <span className="ml-auto mr-[7px]"><CloseX /></span>
              </div>
              <WinButtons />
            </div>
            <div className="h-[3px] shrink-0 bg-[#e9e9e9]" />
            <div className="mx-[1px] h-[352px] shrink-0 bg-white border-[2px] border-[#bdbbb4] rounded-[3px]">
              <MainChart />
            </div>
            <div className="flex-1 flex items-start pl-[1px] text-[14px] text-[#5c5c5c] whitespace-nowrap">
              <div className="h-[27px] w-[114px] bg-white border border-t-0 border-[#b5b4b0] rounded-b-[3px] flex items-center pl-[4px] text-[#3c3c3c]">Chromatogram</div>
              <div className="h-[25px] w-[67px] ml-[2px] border border-t-0 border-[#c5c4c0] rounded-b-[3px] flex items-center justify-center">Options</div>
              <div className="h-[25px] w-[39px] ml-[2px] border border-t-0 border-[#c5c4c0] rounded-b-[3px] flex items-center justify-center">Info</div>
              <div className="h-[25px] w-[110px] ml-[1px] border border-t-0 border-[#c5c4c0] rounded-b-[3px] flex items-center justify-center">Ion Transitions</div>
              <div className="h-[25px] w-[201px] ml-[1px] border border-t-0 border-[#c5c4c0] rounded-b-[3px] flex items-center justify-center">Referenced Chromatograms</div>
            </div>
          </div>

          <div className="flex gap-[12px] mt-[10px] h-[506px] shrink-0">
            <Panel
              className="w-[416px] shrink-0"
              tabs={[
                { w: "w-[35px]", icon: "chrom box", label: "S" },
                { w: "w-[58px]", icon: "red", label: "P", active: true, close: true },
                { w: "w-[37px]", icon: "chrom box", label: "S" },
                { w: "w-[38px]", icon: "info", label: "P" },
                { w: "w-[38px]", icon: "monitor", label: "C" },
                { w: "w-[37px]", icon: "red", label: "P" },
                { w: "w-[49px]", icon: "bars red", label: "M" },
              ]}
              extra={<span className="ml-[2px] text-[10px] text-[#666] font-bold">»<span className="font-normal">4</span></span>}
            >
              <div className="mx-[2px]"><SpectrumChart /></div>
            </Panel>

            <div className="w-[455px] flex flex-col shrink-0">
              <Panel className="h-[248px] shrink-0" tabs={[{ w: "w-[143px]", icon: "bars low", label: "Molecule View", active: true, close: true }]}>
                <div className="mx-[2px]">
                  <p className="h-[26px] flex items-center pl-[4px] text-[14px] text-[#4c4c4c]">3-Furanmethanol | O1C=C(C=C1)CO</p>
                  <Molecule />
                </div>
              </Panel>
              <Panel className="h-[249px] shrink-0 mt-[9px]" tabs={[{ w: "w-[214px]", icon: "heat", label: "Chromatogram Heatmap", active: true, close: true }]}>
                <div className="mx-[2px]"><Heatmap /></div>
              </Panel>
            </div>

            <div className="w-[732px] flex flex-col shrink-0">
              <Panel
                className="h-[248px] shrink-0"
                tabs={[
                  { w: "w-[78px]", icon: "chrom", label: "Selec..." },
                  { w: "w-[79px]", icon: "chrom pin", label: "Pinne..." },
                  { w: "w-[80px]", icon: "chrom", label: "Selec..." },
                  { w: "w-[78px]", icon: "twin base", label: "Basel..." },
                  { w: "w-[76px]", icon: "ion", label: "Ion T..." },
                  { w: "w-[85px]", icon: "red", label: "Mass ..." },
                  { w: "w-[99px]", icon: "one", label: "Peak ...", active: true, close: true },
                  { w: "w-[80px]", icon: "one base", label: "Peak ..." },
                ]}
              >
                <div className="text-[14px] h-full"><HitsTable /></div>
              </Panel>
              <Panel className="h-[249px] shrink-0 mt-[9px]" tabs={[{ w: "w-[205px]", icon: "wave", label: "Chromatogram Overlay", active: true, close: true }]}>
                <Overlay />
              </Panel>
            </div>
          </div>
        </div>
      </div>

      {/* status line */}
      <div className="h-[29px] mt-[8px] shrink-0 flex items-center pl-[8px] text-[14px] text-[#4c4c4c]">
        <Ico n="win" />
        <span className="ml-[9px] -mt-[5px]">Done: Peak result formulas calculated.</span>
        <div className="ml-auto relative flex w-[152px] h-full bg-white">
          <div className="w-[103px] h-full bg-black" />
          <span className="absolute left-[30px] top-0 h-full flex items-center text-white whitespace-nowrap">309M of 45<span className="text-[#e8e8e8]">3M</span></span>
        </div>
        <div className="w-[18px] flex justify-center">
          <svg viewBox="0 0 12 18" width="12" height="18">
            <path fill="#3aa0c0" stroke="#2a7a96" d="M2 4h8l-1 13H3zM1 2.500h10M4 1h4" />
            <path stroke="#d0eef6" d="M4.500 6l.5 9M7.500 6l-.5 9" />
          </svg>
        </div>
      </div>
    </div>
  );
}
